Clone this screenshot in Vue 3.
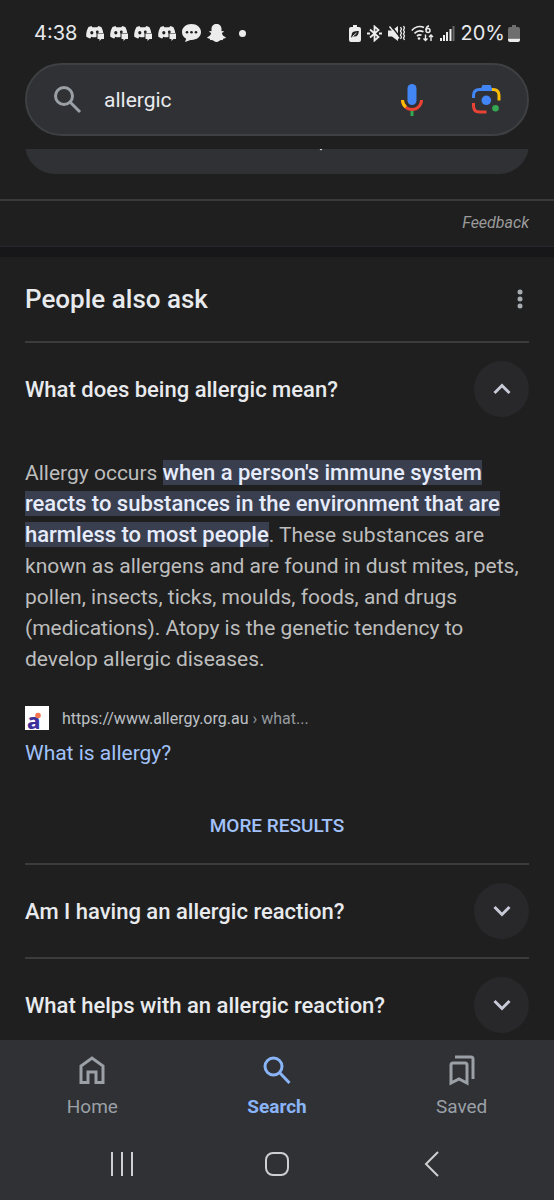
<template>
  <div class="app">
    <header class="top">
      <!-- status bar -->
      <div class="status">
        <div class="status-side">
          <span class="clock">4:38</span>
          <svg v-for="n in 4" :key="n" class="notice" width="18" height="16" viewBox="0 0 18 16">
            <path fill="#ececec" fill-rule="evenodd" d="M5.500 1 2.500 2C1 4.500 0 7.500.2 11.500c1.300 1.200 2.600 1.800 4.100 2l1-1.700c2 .7 3.700.6 5.200.2V8h6.700c-.2-2.200-1-4.300-2-6l-3-1-.8 1.300H6.300zM5.800 6a1.600 1.800 0 1 1 0 3.600A1.600 1.800 0 0 1 5.800 6z" />
            <path fill="#ececec" d="M11.500 8.500H18v5.500h-2.500l-2 2v-2h-2z" />
            <circle cx="11.300" cy="7" r="1.400" fill="#1f1f1f" />
          </svg>
          <svg class="notice" width="19" height="18" viewBox="0 0 19 18">
            <path fill="#ececec" d="M9.500 0C4.200 0 0 3.500 0 8c0 3 1.600 5.400 4.200 6.800L3 18l5.500-2.100c5.900.4 10.500-3 10.500-7.900C19 3.500 14.800 0 9.500 0z" />
            <circle cx="5" cy="8.200" r="1.300" fill="#1f1f1f" />
            <circle cx="9.500" cy="8.200" r="1.300" fill="#1f1f1f" />
            <circle cx="14" cy="8.200" r="1.300" fill="#1f1f1f" />
          </svg>
          <svg class="notice" width="19" height="18" viewBox="0 0 19 18">
            <path fill="#ececec" d="M9.500 0C6.500 0 4.500 2 4.500 5v2.200L2.700 7c-.8.400-.6 1.200 1.500 2-.6 2-1.900 3.600-4 4.300 0 1.100 1.500 1.300 2.600 1.500l.5 1.400c1.700-.3 2.500-.1 3.600.8 1.700 1.300 3.500 1.300 5.200 0 1.100-.9 1.900-1.100 3.600-.8l.5-1.400c1.100-.2 2.600-.4 2.600-1.500-2.100-.7-3.400-2.300-4-4.300 2.100-.8 2.300-1.600 1.500-2l-1.800.2V5c0-3-2-5-5-5z" />
          </svg>
          <span class="more-dot"></span>
        </div>

        <div class="status-side">
          <svg width="12" height="17" viewBox="0 0 12 17">
            <path fill="#ececec" d="M4 0h4v2h2q2 0 2 2v11q0 2-2 2H2q-2 0-2-2V4q0-2 2-2h2z" />
            <path fill="#1f1f1f" d="M9.800 6C5 6 2.800 7 2.800 9.600L2 12l1 .5.700-1.200c4 1 6.100-1 6.100-5.300z" />
            <path d="M3.500 11.500 7.500 8" stroke="#ececec" fill="none" />
          </svg>
          <svg width="15" height="17" viewBox="0 0 15 17" fill="none" stroke="#ececec" stroke-width="1.800">
            <path d="M3 4.500 11.500 12 7.500 15.500v-14L11.500 5 3 12.500" />
            <path d="M0 8.500h3M12 8.500h3" stroke-width="2" />
          </svg>
          <svg width="17" height="17" viewBox="0 0 17 17">
            <path fill="#ececec" d="M0 5.500h4L10 1v15l-6-4.500H0z" />
            <path d="M2.500 0 13 13.500" stroke="#1f1f1f" stroke-width="1.500" />
            <path d="M1.500 1.500 11 13.500" stroke="#ececec" stroke-width="1.500" />
            <path d="m12.500 2 1 2-1 2 1 2-1 2 1 2-1 2M15.500 1l1 2-1 2 1 2-1 2 1 2-1 2 1 2" fill="none" stroke="#ececec" stroke-width="1.300" />
          </svg>
          <svg width="23" height="17" viewBox="0 0 23 17" fill="none" stroke="#ececec" stroke-width="1.700">
            <path d="M.8 5.500C4 1.700 9 .8 13 2.500M3.500 8.300c2.500-2.500 6-3 9-1.500M6 11c1.400-1.200 3-1.400 4.500-.7" />
            <circle cx="8" cy="13.500" r="1.300" fill="#ececec" stroke="none" />
            <circle cx="17" cy="5.500" r="2" stroke-width="1.500" />
            <path d="M15 5C15 3 16 1.500 18 .8" stroke-width="1.500" />
            <path d="M14.500 9.500v6m-2-2 2 2 2-2M20 16v-6m-2 2 2-2 2 2" stroke-width="1.400" />
          </svg>
          <svg width="15" height="16" viewBox="0 0 15 16" fill="#ececec">
            <path d="M0 13h2v3H0zM3 10h2v6H3zM6 7h2v9H6zM9.500 4h2v12h-2z" />
            <path d="M12.500 1h2v15h-2z" fill="#686868" />
          </svg>
          <span class="percent">20%</span>
          <svg width="12" height="17" viewBox="0 0 12 17">
            <path fill="#6e6e6e" d="M4 0h4v2h2q2 0 2 2v9H0V4q0-2 2-2h2z" />
            <path fill="#ececec" d="M0 13.500h12V15q0 2-2 2H2q-2 0-2-2z" />
          </svg>
        </div>
      </div>

      <form class="search" role="search" @submit.prevent>
        <svg width="28" height="28" viewBox="0 0 28 28" fill="none" stroke="#9aa0a6" stroke-width="3">
          <circle cx="10" cy="10" r="8.500" />
          <path d="m16 16 10 10" />
        </svg>
        <input v-model="query" type="text" aria-label="Search" />
        <button type="button" class="icon-btn" aria-label="Voice search">
          <svg width="22" height="32" viewBox="0 0 22 32">
            <rect x="6.500" y="0" width="9" height="21" rx="4.500" fill="#4285f4" />
            <path d="M1.500 16A9.500 9.500 0 0 0 20.500 16" fill="none" stroke="#ea4335" stroke-width="3" />
            <path d="M1.500 16A9.500 9.500 0 0 0 4.800 23.200" fill="none" stroke="#fbbc04" stroke-width="3" />
            <path d="M9.500 27h3v5h-3z" fill="#34a853" />
          </svg>
        </button>
        <button type="button" class="icon-btn" aria-label="Search by image">
          <svg width="29" height="29" viewBox="0 0 29 29" fill="none" stroke-width="3">
            <path d="M1.500 13v-2.500q0-6 6-6H20" stroke="#4285f4" />
            <path d="M8.500 4.500 10.500 0h8l2 4.500z" fill="#4285f4" />
            <path d="M20 4.500h1q6 0 6 6v5" stroke="#fbbc04" />
            <path d="M1.500 18v3q0 6 6 6h7" stroke="#ea4335" />
            <circle cx="14.300" cy="15.300" r="4.800" fill="#4285f4" />
            <circle cx="23.500" cy="23.200" r="3.300" fill="#34a853" />
          </svg>
        </button>
      </form>
    </header>

    <main class="results">
      <section class="previous">
        <button type="button" class="show-more" aria-label="Show more">
          <svg width="14" height="14" viewBox="0 0 14 14" fill="none" stroke="#e8eaed" stroke-width="2">
            <path d="m1 6 6 6 6-6" />
          </svg>
        </button>
      </section>
      <div class="feedback"><a href="#">Feedback</a></div>

      <section class="ask">
        <div class="ask-head">
          <h2>People also ask</h2>
          <button type="button" class="menu" aria-label="About this result">
            <svg width="6" height="20" viewBox="0 0 6 20" fill="#a8abaf">
              <circle cx="3" cy="3" r="2.500" />
              <circle cx="3" cy="10" r="2.500" />
              <circle cx="3" cy="17" r="2.500" />
            </svg>
          </button>
        </div>

        <article v-for="(item, i) in questions" :key="item.title" class="question">
          <button type="button" class="question-head" :aria-expanded="open === i" @click="toggle(i)">
            <span>{{ item.title }}</span>
            <span class="round">
              <svg width="18" height="12" viewBox="0 0 18 12" fill="none" stroke="#c8cad8" stroke-width="3">
                <path :d="open === i ? 'm1.500 10 7.500-7.500 7.500 7.500' : 'm1.500 2 7.500 7.500 7.500-7.500'" />
              </svg>
            </span>
          </button>
          <div v-if="item.answer && open === i" class="answer">
            <p>{{ item.answer.before }} <mark>{{ item.answer.marked }}</mark>{{ item.answer.after }}</p>
            <div class="source">
              <svg class="favicon" width="24" height="24" viewBox="0 0 24 24">
                <path fill="#fff" d="M0 0h24v24H0z" />
                <text x="2" y="23" class="favicon-letter">a</text>
                <circle cx="13" cy="9.500" r="2.800" fill="#f4764f" />
              </svg>
              <span>https://www.allergy.org.au <span class="crumb">› what...</span></span>
            </div>
            <a class="source-title" href="#">What is allergy?</a>
            <a class="more" href="#">MORE RESULTS</a>
          </div>
        </article>
      </section>
    </main>

    <footer class="bottom">
      <nav class="tabs">
        <a v-for="tab in tabs" :key="tab.name" href="#" :class="{ active: tab.name === 'Search' }">
          <svg width="28" height="32" viewBox="0 0 28 32" fill="none" stroke="currentColor" stroke-width="3">
            <path :d="tab.icon" />
          </svg>
          <span>{{ tab.name }}</span>
        </a>
      </nav>
      <div class="system">
        <button type="button" aria-label="Recent apps">
          <svg width="24" height="26" viewBox="0 0 24 26"><path d="M2 1v24M12 1v24M22 1v24" /></svg>
        </button>
        <button type="button" aria-label="Home screen">
          <svg width="26" height="26" viewBox="0 0 26 26"><rect x="2" y="2" width="22" height="22" rx="7" /></svg>
        </button>
        <button type="button" aria-label="Back">
          <svg width="16" height="26" viewBox="0 0 16 26"><path d="M14 1 2 13l12 12" /></svg>
        </button>
      </div>
    </footer>
  </div>
</template>

<script setup>
import { ref } from 'vue'

const query = ref('allergic')
const open = ref(0)

const questions = [
  {
    title: 'What does being allergic mean?',
    answer: {
      before: 'Allergy occurs',
      marked: "when a person's immune system reacts to substances in the environment that are harmless to most people",
      after: '. These substances are known as allergens and are found in dust mites, pets, pollen, insects, ticks, moulds, foods, and drugs (medications). Atopy is the genetic tendency to develop allergic diseases.'
    }
  },
  { title: 'Am I having an allergic reaction?' },
  { title: 'What helps with an allergic reaction?' }
]

const tabs = [
  { name: 'Home', icon: 'M3 28.500V12L14 4l11 8v16.500H18V18h-8v10.500z' },
  { name: 'Search', icon: 'M10.500 4a8.500 8.500 0 1 0 0 17 8.500 8.500 0 0 0 0-17zM16.500 18.500l10 10.500' },
  { name: 'Saved', icon: 'M3 29V11q0-2 2-2h12q2 0 2 2v18l-8-4zM7 3h16q2 0 2 2v20' }
]

const toggle = (i) => {
  open.value = open.value === i ? -1 : i
}
</script>

<style>
body {
  background: #1f1f1f;
}
</style>

<style scoped>
.app {
  display: flex;
  flex-direction: column;
  height: 100vh;
  background: #1f1f1f;
  color: #e8eaed;
  font-family: Roboto, "Liberation Sans", sans-serif;
}

.app * {
  box-sizing: border-box;
}

svg {
  display: block;
  flex: none;
}

button {
  padding: 0;
  border: 0;
  background: none;
  color: inherit;
  font: inherit;
  cursor: pointer;
}

a {
  color: inherit;
  text-decoration: none;
}

/* 顶部 */
.top {
  padding-bottom: 13px;
}

.status {
  display: flex;
  justify-content: space-between;
  align-items: center;
  height: 63px;
  padding: 3px 34px 0;
  font-family: Inter, sans-serif;
  font-size: 20px;
}

.status-side {
  display: flex;
  align-items: center;
  gap: 6px;
}

.clock {
  margin-right: 3px;
}

.more-dot {
  width: 7px;
  height: 7px;
  margin-left: 7px;
  border-radius: 50%;
  background: #ececec;
}

.percent {
  margin-right: -3px;
}

.search {
  display: flex;
  align-items: center;
  height: 73px;
  margin: 0 25px;
  padding: 0 26px 0 27px;
  border: 2px solid #3e4043;
  border-radius: 37px;
  background: #303134;
}

.search input {
  flex: 1;
  min-width: 0;
  margin-left: 22px;
  padding: 0;
  border: 0;
  outline: 0;
  background: none;
  color: #e8eaed;
  font: inherit;
  font-size: 21px;
}

.icon-btn {
  margin-left: 49px;
}

.results {
  flex: 1;
  min-height: 0;
  overflow: hidden;
}

/* 上一段结果的末尾 */
.previous {
  padding: 0 25px 25px;
  border-bottom: 2px solid #38393c;
}

.show-more {
  display: flex;
  align-items: center;
  justify-content: center;
  width: 100%;
  height: 72px;
  margin-top: -47px;
  padding: 12px 0 0 88px;
  border-radius: 30px;
  background: #303134;
}

.feedback {
  padding: 10px 25px 0;
  height: 46px;
  border-bottom: 1px solid #25282b;
  color: #9b9b9b;
  font-size: 16px;
  font-style: italic;
  line-height: 24px;
  text-align: right;
}

.ask {
  border-top: 10px solid #171719;
  padding: 0 25px;
}

.ask-head {
  display: flex;
  align-items: center;
  justify-content: space-between;
  height: 84px;
}

h2 {
  margin: 0;
  font-size: 26px;
  font-weight: 500;
}

.menu {
  padding: 0 6px;
}

.question {
  border-top: 2px solid #3a3c3e;
}

.question-head {
  display: flex;
  align-items: center;
  justify-content: space-between;
  width: 100%;
  height: 92px;
  font-size: 22px;
  font-weight: 500;
  text-align: left;
}

.round {
  display: flex;
  align-items: center;
  justify-content: center;
  width: 55px;
  height: 56px;
  border-radius: 50%;
  background: #28282a;
}

.answer {
  display: flex;
  flex-direction: column;
  padding-top: 23px;
}

.answer p {
  margin: 0;
  color: #bdbdbd;
  font-size: 21px;
  line-height: 31px;
}

mark {
  background: #3a3f50;
  color: #e6ecfb;
  font-size: 22px;
  font-weight: 500;
  line-height: 26px;
}

.source {
  display: flex;
  align-items: center;
  gap: 13px;
  margin-top: 31px;
  color: #bdc1c6;
  font-size: 16px;
}

.crumb {
  color: #969a9f;
}

.favicon {
  overflow: visible;
}

.favicon-letter {
  fill: #3d2f9c;
  font-family: "Noto Sans", sans-serif;
  font-size: 22px;
  font-weight: 800;
}

.source-title {
  margin-top: 9px;
  color: #a1c2fa;
  font-size: 21px;
  line-height: 28px;
}

.more {
  margin-top: 42px;
  padding-bottom: 20px;
  color: #a1c2fa;
  font-size: 19px;
  font-weight: 500;
  line-height: 34px;
  text-align: center;
}

/* 底部导航 */
.bottom {
  height: 160px;
  background: #303134;
}

.tabs {
  display: grid;
  grid-template-columns: repeat(3, 1fr);
  padding-top: 14px;
  color: #9aa0a6;
  font-size: 19px;
  line-height: 24px;
}

.tabs a {
  display: flex;
  flex-direction: column;
  align-items: center;
  gap: 9px;
}

.tabs .active {
  color: #8ab4f8;
  font-weight: 700;
}

.system {
  display: grid;
  grid-template-columns: repeat(3, 1fr);
  justify-items: center;
  padding: 32px 44px 0;
}

.system svg {
  fill: none;
  stroke: #cfcfd1;
  stroke-width: 2;
}
</style>
